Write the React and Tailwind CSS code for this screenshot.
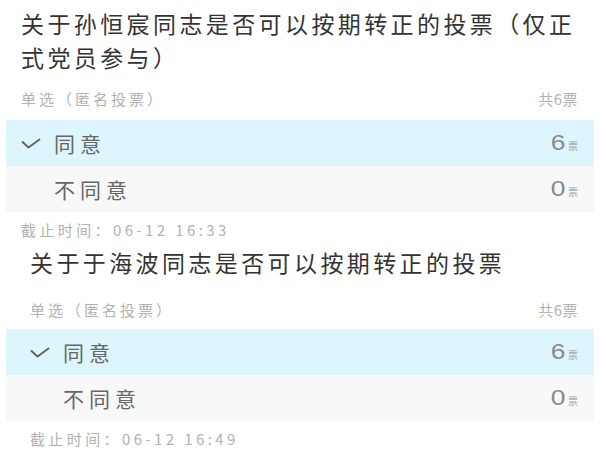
import React from "react";

const font = { fontFamily: '"Noto Sans CJK SC", "Noto Sans", "Liberation Sans", sans-serif' };

function Check() {
  return (
    <svg width="20" height="11" viewBox="0 0 20 11" fill="none" className="shrink-0">
      <path d="M1.5 4 L7.5 9.5 L18.5 1.5" stroke="#5f5f5f" strokeWidth="1.8" strokeLinecap="round" strokeLinejoin="round" />
    </svg>
  );
}

function Option({ label, count, selected, indent }) {
  return (
    <div
      className={`mx-[6px] h-[46px] flex items-center justify-between pr-[16px] ${selected ? "bg-[#ddf5fc]" : "bg-[#f8f8f8]"}`}
      style={{ paddingLeft: indent }}
    >
      <div className="flex items-center">
        <div className="w-[33px] flex items-center">{selected && <Check />}</div>
        <span className="text-[21px] tracking-[5px] text-[#666] leading-none">{label}</span>
      </div>
      <div className="flex items-baseline gap-[4px]">
        <span className="inline-block text-[22px] scale-x-[1.2] text-[#8a8a8a] leading-none" style={{ fontFamily: '"Liberation Sans", Arial, sans-serif' }}>{count}</span>
        <span className="text-[10px] text-[#a0a0a0] leading-none">票</span>
      </div>
    </div>
  );
}

function Poll({ title, total, options, deadline, pl, titleMb, metaMb }) {
  return (
    <div>
      <div className="pr-[20px]" style={{ paddingLeft: pl, marginBottom: titleMb }}>
        <h2 className="text-[23px] leading-[34px] tracking-[3.4px] text-[#333] font-normal">{title}</h2>
      </div>
      <div className="flex justify-between items-center h-[20px] pr-[22px]" style={{ paddingLeft: pl, marginBottom: metaMb }}>
        <span className="text-[15px] tracking-[3px] text-[#b2b2b2]">单选（匿名投票）</span>
        <span className="text-[15px] tracking-[0.5px] text-[#b2b2b2]">共{total}票</span>
      </div>
      {options.map((o) => (
        <Option key={o.label} {...o} indent={pl - 6} />
      ))}
      <div className="h-[20px] mt-[8px] flex items-center" style={{ paddingLeft: pl }}>
        <span className="text-[15px] tracking-[3.4px] text-[#b2b2b2]">截止时间：06-12 {deadline}</span>
      </div>
    </div>
  );
}

export default function App() {
  return (
    <div className="w-[600px] h-[450px] bg-white overflow-hidden pt-[6px]" style={font}>
      <Poll
        title="关于孙恒宸同志是否可以按期转正的投票（仅正式党员参与）"
        total={6}
        pl={21}
        titleMb={15}
        metaMb={11}
        deadline="16:33"
        options={[
          { label: "同意", count: 6, selected: true },
          { label: "不同意", count: 0, selected: false },
        ]}
      />
      <div className="mt-[5px]">
        <Poll
          title="关于于海波同志是否可以按期转正的投票"
          total={6}
          pl={30}
          titleMb={21}
          metaMb={9}
          deadline="16:49"
          options={[
            { label: "同意", count: 6, selected: true },
            { label: "不同意", count: 0, selected: false },
          ]}
        />
      </div>
    </div>
  );
}
